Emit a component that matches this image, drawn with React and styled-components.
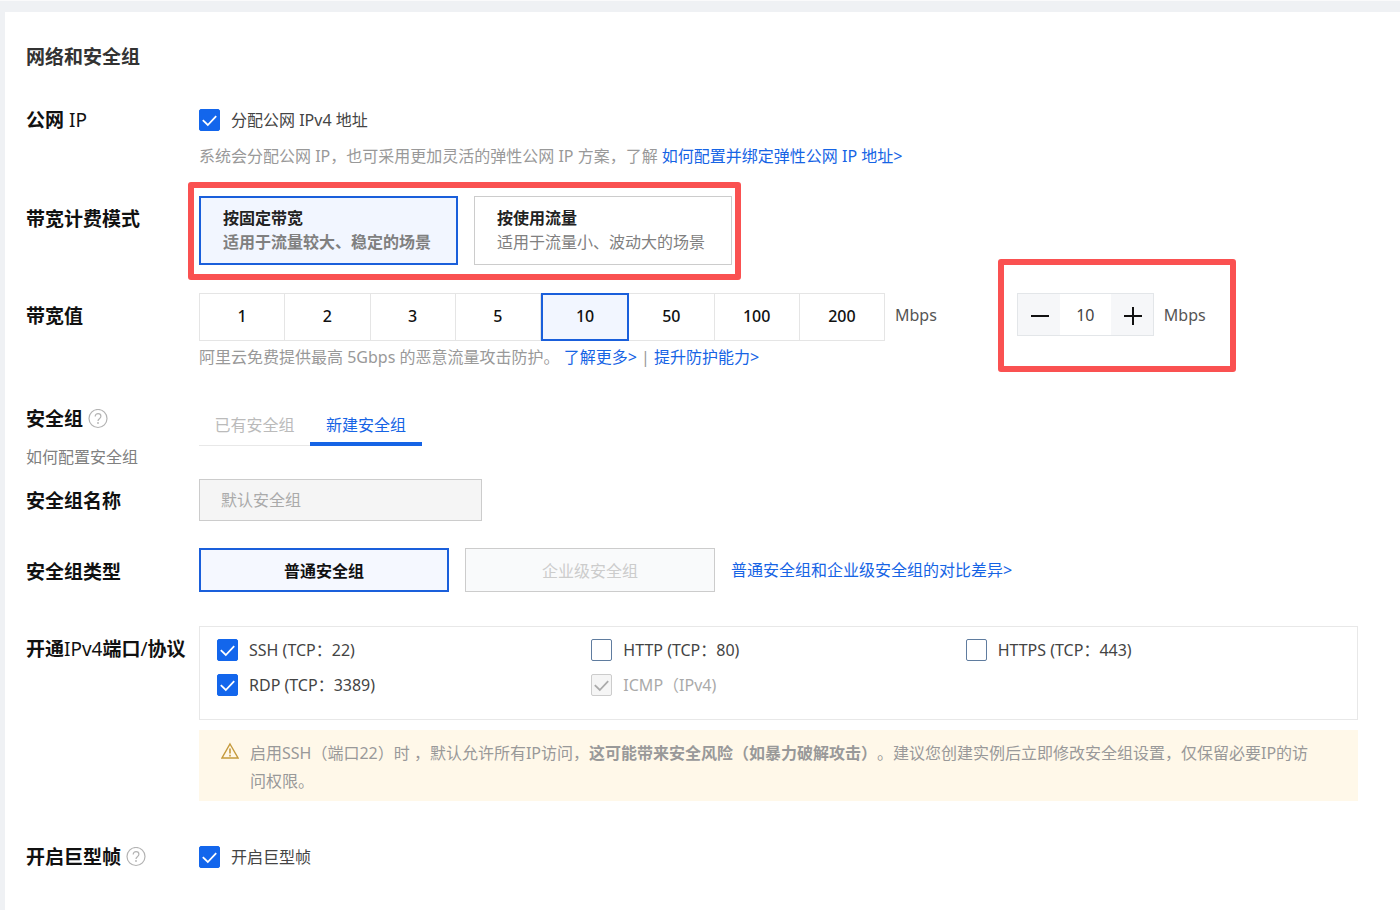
import React, { useState } from "react";
import styled, { createGlobalStyle, css } from "styled-components";

const GlobalStyle = createGlobalStyle`
  *, *::before, *::after { box-sizing: border-box; }
  body {
    margin: 0;
    background: #eff1f4;
    color: #333;
    font: 400 16px/24px "Noto Sans", "Noto Sans CJK SC", sans-serif;
    text-spacing-trim: space-all;
  }
  button, input { font: inherit; }
`;

const Page = styled.div`
  min-height: 100vh;
  padding: 11px 0 0 5px;
  border-top: 1px solid #fafafb;
  display: flex;
`;

const Panel = styled.main`
  flex: 1;
  min-width: 0;
  padding: 31px 42px 31px 21px;
  background: #fff;
`;

const Title = styled.h1`
  margin: 0;
  font-size: 19px;
  line-height: 28px;
  font-weight: 700;
`;

const Row = styled.section`
  display: grid;
  grid-template-columns: 173px minmax(0, 1fr);
  margin-top: ${(p) => p.$gap}px;
`;

const LabelCell = styled.div`
  padding-top: ${(p) => p.$pad || 0}px;
`;

const Label = styled.h2`
  display: flex;
  align-items: center;
  gap: 5px;
  margin: 0;
  color: #111;
  font-size: 19px;
  line-height: 28px;
  font-weight: 700;
  white-space: nowrap;
`;

const Latin = styled.span`
  font-weight: 400;
`;

const LabelLink = styled.a`
  display: inline-block;
  margin-top: 12px;
  color: #808080;
  text-decoration: none;
`;

const Hint = styled.p`
  margin: ${(p) => p.$gap}px 0 0;
  color: #999;
`;

const Link = styled.a`
  color: #1664e5;
  text-decoration: none;
`;

const CheckLabel = styled.label`
  display: flex;
  align-items: center;
  gap: 11px;
  height: 22px;
  color: ${(p) => (p.$muted ? "#aaa" : "#444")};
`;

const CheckMark = styled.span`
  display: grid;
  flex: none;
  width: 21px;
  height: 22px;

  & > * {
    grid-area: 1 / 1;
  }
  & > svg {
    pointer-events: none;
    stroke: ${(p) => (p.$muted ? "#aaa" : "#fff")};
  }
`;

const CheckInput = styled.input`
  appearance: none;
  width: 100%;
  height: 100%;
  margin: 0;
  border: 1px solid #5f7c9f;
  border-radius: 2px;
  background: #fff;

  &:checked {
    border-color: #1366ec;
    background: #1366ec;
  }
  &:disabled {
    border-color: #ccc;
    background: #f5f5f5;
  }
`;

const CheckArea = styled.div`
  padding-top: 3px;
`;

const callout = css`
  position: relative;

  &::after {
    content: "";
    position: absolute;
    border: 6px solid #fa5151;
    border-radius: 3px;
    pointer-events: none;
  }
`;

const ModeGroup = styled.div`
  ${callout}
  display: flex;
  gap: 16px;
  width: fit-content;

  &::after {
    inset: -14px -9px -15px -11px;
  }
`;

const ModeCard = styled.button`
  width: ${(p) => (p.$active ? 259 : 258)}px;
  height: 69px;
  padding: 0 22px 2px;
  border: ${(p) => (p.$active ? "2px solid #1a5fdb" : "1px solid #ccc")};
  background: ${(p) => (p.$active ? "#f2f6ff" : "#fff")};
  text-align: left;
  white-space: nowrap;
`;

const ModeName = styled.strong`
  display: block;
  color: #222;
`;

const ModeText = styled.span`
  display: block;
  color: #808080;
  font-weight: ${(p) => (p.$active ? 700 : 400)};
`;

const BandwidthLine = styled.div`
  display: flex;
  align-items: flex-start;
`;

const Segments = styled.div`
  display: flex;
  width: 686px;
  height: 48px;
`;

const Segment = styled.button`
  flex: 1;
  padding: 0 0 2px;
  border: 1px solid #e5e5e5;
  border-left-width: ${(p) => (p.$first ? 1 : 0)}px;
  background: #fff;
  color: #111;
  font-weight: 500;

  ${(p) =>
    p.$active &&
    css`
      border: 2px solid #1a5fdb;
      background: #f2f6ff;
    `}
`;

const Unit = styled.span`
  margin-left: 10px;
  line-height: 44px;
  color: #555;
`;

const StepperGroup = styled.div`
  ${callout}
  display: flex;
  margin-left: 80px;

  &::after {
    inset: -34px -30px -35px -19px;
  }
`;

const Stepper = styled.div`
  display: flex;
  width: 137px;
  height: 43px;
  border: 1px solid #e3e6e9;
`;

const StepButton = styled.button`
  display: grid;
  place-items: center;
  width: 42px;
  padding: 0;
  border: 0;
  background: #f6f7f9;
`;

const StepInput = styled.input`
  flex: 1;
  width: 0;
  padding: 0;
  border: 0;
  background: #fff;
  color: #444;
  text-align: center;
`;

const Tabs = styled.div`
  display: flex;
  width: fit-content;
`;

const Tab = styled.button`
  width: ${(p) => (p.$active ? 112 : 111)}px;
  height: 42px;
  padding: ${(p) => (p.$active ? "3px 0 0" : "0")};
  border: 0;
  border-bottom: ${(p) => (p.$active ? "4px solid #1664e5" : "1px solid #e8e8e8")};
  background: none;
  color: ${(p) => (p.$active ? "#1664e5" : "#bbb")};
`;

const NameInput = styled.input`
  display: block;
  width: 283px;
  height: 42px;
  padding: 0 21px 2px;
  border: 1px solid #ccc;
  background: #f5f5f5;
  color: #aaa;
`;

const TypeLine = styled.div`
  display: flex;
  align-items: center;
  gap: 16px;
`;

const TypeButton = styled.button`
  width: 250px;
  height: 44px;
  padding: 2px 0 0;
  border: ${(p) => (p.$active ? "2px solid #1a5fdb" : "1px solid #ccc")};
  background: ${(p) => (p.$active ? "#f5f8ff" : "#f9fafb")};
  color: ${(p) => (p.$active ? "#111" : "#ccc")};
  font-weight: ${(p) => (p.$active ? 700 : 400)};
`;

const PortBox = styled.div`
  display: grid;
  grid-template-columns: repeat(3, 1fr);
  row-gap: 13px;
  padding: 12px 17px 23px;
  border: 1px solid #e8e8e8;
`;

const Warning = styled.div`
  display: flex;
  gap: 11px;
  margin-top: 10px;
  padding: 9px 42px 6px 22px;
  background: #fff8e9;
  color: #999;
  line-height: 28px;

  & > svg {
    flex: none;
    margin-top: 3px;
  }
  & > p {
    margin: 0;
  }
`;

function Checkbox({ text, initial = false, disabled = false }) {
  const [checked, setChecked] = useState(initial);
  return (
    <CheckLabel $muted={disabled}>
      <CheckMark $muted={disabled}>
        <CheckInput
          type="checkbox"
          checked={checked}
          disabled={disabled}
          onChange={(e) => setChecked(e.target.checked)}
        />
        {checked && (
          <svg width="21" height="22" viewBox="0 0 21 22" fill="none" strokeWidth="1.8" aria-hidden="true">
            <path d="M3.8 11.2 8.8 16 17.2 7.2" />
          </svg>
        )}
      </CheckMark>
      {text}
    </CheckLabel>
  );
}

function HelpIcon() {
  return (
    <svg width="20" height="20" viewBox="0 0 20 20" fill="none" stroke="#b3b3b3" strokeWidth="1.2" aria-hidden="true">
      <circle cx="10" cy="9.5" r="9" />
      <path d="M7.2 7.6C7.2 5.8 8.4 4.7 10.1 4.7s2.8 1.1 2.8 2.6c0 1.2-.7 1.8-1.5 2.4-.9.7-1.4 1.1-1.4 2.3" />
      <circle cx="10" cy="14" r=".9" fill="#b3b3b3" stroke="none" />
    </svg>
  );
}

function WarningIcon() {
  return (
    <svg width="18" height="18" viewBox="0 0 18 18" fill="none" stroke="#c59a3c" strokeWidth="1.4" aria-hidden="true">
      <path d="M9 2 17 16H1Z" />
      <path d="M9 6.5v5M9 12.8v1.6" strokeWidth="1.6" />
    </svg>
  );
}

const modes = [
  { name: "按固定带宽", text: "适用于流量较大、稳定的场景" },
  { name: "按使用流量", text: "适用于流量小、波动大的场景" },
];
const speeds = [1, 2, 3, 5, 10, 50, 100, 200];

export default function App() {
  const [mode, setMode] = useState(0);
  const [speed, setSpeed] = useState(10);

  return (
    <Page>
      <GlobalStyle />
      <Panel>
        <Title>网络和安全组</Title>

        <Row $gap={35}>
          <LabelCell>
            <Label><span>公网 <Latin>IP</Latin></span></Label>
          </LabelCell>
          <CheckArea>
            <Checkbox text="分配公网 IPv4 地址" initial />
            <Hint $gap={13}>
              系统会分配公网 IP，也可采用更加灵活的弹性公网 IP 方案，了解 <Link href="#eip">如何配置并绑定弹性公网 IP 地址&gt;</Link>
            </Hint>
          </CheckArea>
        </Row>

        <Row $gap={28}>
          <LabelCell $pad={9}><Label>带宽计费模式</Label></LabelCell>
          <ModeGroup>
            {modes.map((m, i) => (
              <ModeCard key={m.name} type="button" $active={mode === i} onClick={() => setMode(i)}>
                <ModeName>{m.name}</ModeName>
                <ModeText $active={mode === i}>{m.text}</ModeText>
              </ModeCard>
            ))}
          </ModeGroup>
        </Row>

        <Row $gap={28}>
          <LabelCell $pad={9}><Label>带宽值</Label></LabelCell>
          <div>
            <BandwidthLine>
              <Segments>
                {speeds.map((s, i) => (
                  <Segment key={s} type="button" $first={i === 0} $active={speed === s} onClick={() => setSpeed(s)}>
                    {s}
                  </Segment>
                ))}
              </Segments>
              <Unit>Mbps</Unit>
              <StepperGroup>
                <Stepper>
                  <StepButton type="button" aria-label="减少" onClick={() => setSpeed(Math.max(1, speed - 1))}>
                    <svg width="20" height="20" viewBox="0 0 20 20" stroke="#111" strokeWidth="2"><path d="M2 11h18" /></svg>
                  </StepButton>
                  <StepInput
                    aria-label="带宽值"
                    value={speed}
                    onChange={(e) => setSpeed(Number(e.target.value) || 1)}
                  />
                  <StepButton type="button" aria-label="增加" onClick={() => setSpeed(speed + 1)}>
                    <svg width="20" height="20" viewBox="0 0 20 20" stroke="#111" strokeWidth="2"><path d="M2 11h18M11 2v18" /></svg>
                  </StepButton>
                </Stepper>
                <Unit>Mbps</Unit>
              </StepperGroup>
            </BandwidthLine>
            <Hint $gap={4}>
              阿里云免费提供最高 5Gbps 的恶意流量攻击防护。 <Link href="#more">了解更多&gt;</Link> | <Link href="#protect">提升防护能力&gt;</Link>
            </Hint>
          </div>
        </Row>

        <Row $gap={35}>
          <LabelCell $pad={1}>
            <Label>安全组<HelpIcon /></Label>
            <LabelLink href="#security-group">如何配置安全组</LabelLink>
          </LabelCell>
          <Tabs role="tablist">
            <Tab type="button" role="tab" aria-selected="false">已有安全组</Tab>
            <Tab type="button" role="tab" aria-selected="true" $active>新建安全组</Tab>
          </Tabs>
        </Row>

        <Row $gap={10}>
          <LabelCell $pad={8}><Label><label htmlFor="group-name">安全组名称</label></Label></LabelCell>
          <NameInput id="group-name" defaultValue="默认安全组" disabled />
        </Row>

        <Row $gap={27}>
          <LabelCell $pad={10}><Label>安全组类型</Label></LabelCell>
          <TypeLine>
            <TypeButton type="button" $active>普通安全组</TypeButton>
            <TypeButton type="button" disabled>企业级安全组</TypeButton>
            <Link href="#compare">普通安全组和企业级安全组的对比差异&gt;</Link>
          </TypeLine>
        </Row>

        <Row $gap={34}>
          <LabelCell $pad={9}>
            <Label><span>开通<Latin>IPv4</Latin>端口<Latin>/</Latin>协议</span></Label>
          </LabelCell>
          <div>
            <PortBox>
              <Checkbox text="SSH (TCP：22)" initial />
              <Checkbox text="HTTP (TCP：80)" />
              <Checkbox text="HTTPS (TCP：443)" />
              <Checkbox text="RDP (TCP：3389)" initial />
              <Checkbox text="ICMP（IPv4)" initial disabled />
            </PortBox>
            <Warning>
              <WarningIcon />
              <p>
                启用SSH（端口22）时 ，默认允许所有IP访问，<strong>这可能带来安全风险（如暴力破解攻击）</strong>。建议您创建实例后立即修改安全组设置，仅保留必要IP的访问权限。
              </p>
            </Warning>
          </div>
        </Row>

        <Row $gap={42}>
          <LabelCell><Label>开启巨型帧<HelpIcon /></Label></LabelCell>
          <CheckArea><Checkbox text="开启巨型帧" initial /></CheckArea>
        </Row>
      </Panel>
    </Page>
  );
}
